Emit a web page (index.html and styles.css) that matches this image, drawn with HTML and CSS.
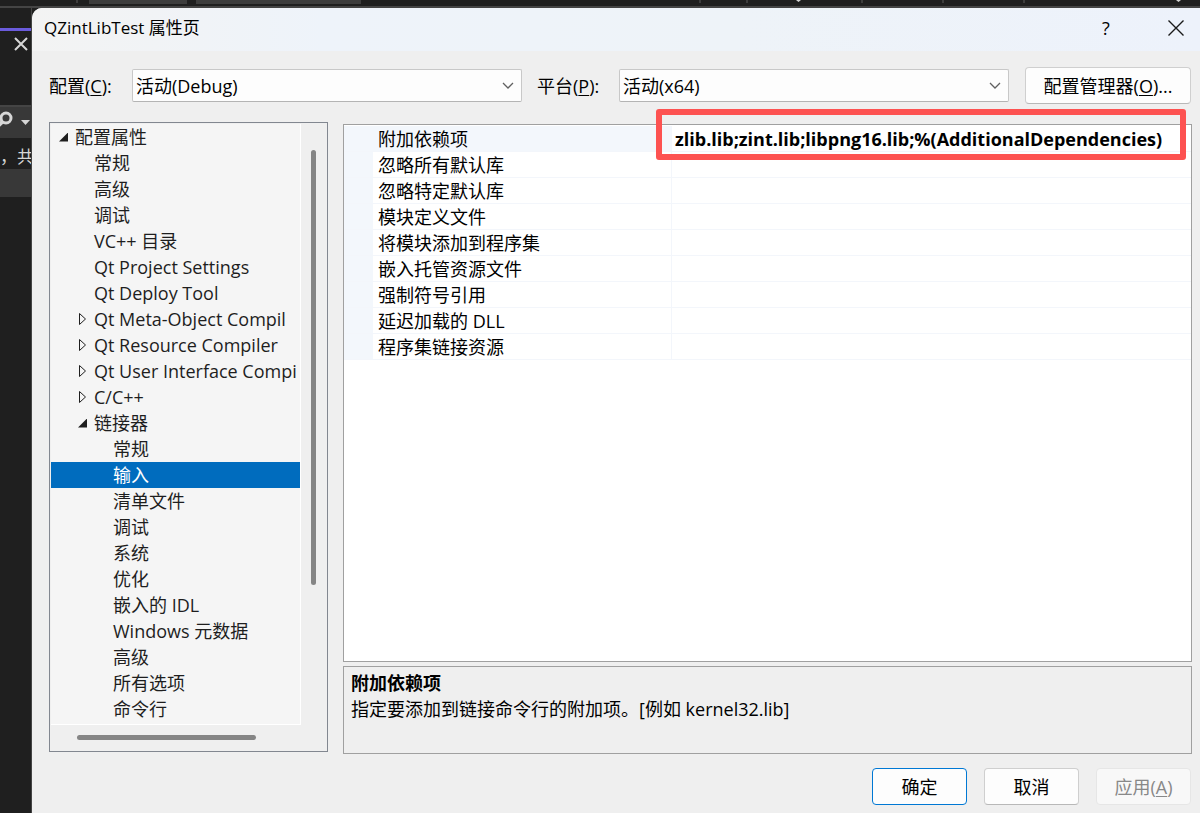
FILE: index.html
```
<!DOCTYPE html>
<html lang="zh-CN">
<head>
    <meta charset="UTF-8">
    <meta name="viewport" content="width=device-width, initial-scale=1.0">
    <title>QZintLibTest 属性页</title>
    <link rel="stylesheet" href="styles.css">
</head>
<body>
    <div class="ide-top">
        <svg width="1200" height="6" viewBox="0 0 1200 6">
            <path d="M76 0h2v3h-2zM699 0h2v3h-2zM746 0h2v3h-2zM861 0h2v3h-2zM942 0h2v3h-2zM1023 0h2v3h-2z" fill="#3d3d3d"/>
            <path d="M89 0h98v4h-98zM196 0h165v4h-165z" fill="#3d3d3d"/>
            <path d="M796 0h5l-2.500 2zM1176 0h5l-2.500 2z" fill="#d6d6d6"/>
        </svg>
    </div>
    <div class="ide-side">
        <div class="ide-tab">
            <svg width="14" height="14" viewBox="0 0 14 14"><path d="M1 1l12 12M13 1L1 13" stroke="#d6d6d6" stroke-width="2" fill="none"/></svg>
        </div>
        <div class="ide-search">
            <svg width="30" height="20" viewBox="0 0 30 20"><circle cx="6" cy="8" r="5" fill="none" stroke="#d6d6d6" stroke-width="3"/><path d="M3 11l-6 6" stroke="#d6d6d6" stroke-width="4"/><path d="M21 10h9l-4.500 5z" fill="#d6d6d6"/></svg>
        </div>
        <div class="ide-count">，共</div>
        <div class="ide-row"></div>
    </div>

    <div class="dialog">
        <header class="title-bar">
            <h1>QZintLibTest 属性页</h1>
            <button class="title-btn" aria-label="帮助">?</button>
            <button class="title-btn close" aria-label="关闭">
                <svg width="16" height="16" viewBox="0 0 16 16"><path d="M0.500 0.500l15 15M15.500 0.500l-15 15" stroke="#1a1a1a" stroke-width="1.400" fill="none"/></svg>
            </button>
        </header>

        <div class="config-bar">
            <label for="config">配置(<u>C</u>):</label>
            <select id="config"><option>活动(Debug)</option></select>
            <label for="platform">平台(<u>P</u>):</label>
            <select id="platform"><option>活动(x64)</option></select>
            <button class="btn manager">配置管理器(<u>O</u>)...</button>
        </div>

        <main class="content">
            <nav class="tree">
                <ul class="tree-list">
                    <li class="open">配置属性</li>
                    <li class="l1">常规</li>
                    <li class="l1">高级</li>
                    <li class="l1">调试</li>
                    <li class="l1">VC++ 目录</li>
                    <li class="l1">Qt Project Settings</li>
                    <li class="l1">Qt Deploy Tool</li>
                    <li class="l1 closed">Qt Meta-Object Compil</li>
                    <li class="l1 closed">Qt Resource Compiler</li>
                    <li class="l1 closed">Qt User Interface Compi</li>
                    <li class="l1 closed">C/C++</li>
                    <li class="l1 open">链接器</li>
                    <li class="l2">常规</li>
                    <li class="l2 selected">输入</li>
                    <li class="l2">清单文件</li>
                    <li class="l2">调试</li>
                    <li class="l2">系统</li>
                    <li class="l2">优化</li>
                    <li class="l2">嵌入的 IDL</li>
                    <li class="l2">Windows 元数据</li>
                    <li class="l2">高级</li>
                    <li class="l2">所有选项</li>
                    <li class="l2">命令行</li>
                </ul>
                <div class="scroll-y"><span></span></div>
                <div class="scroll-x"><span></span></div>
            </nav>

            <section class="details">
                <div class="grid">
                    <table>
                        <colgroup><col class="gutter"><col class="name"><col></colgroup>
                        <tbody>
                            <tr class="current"><td></td><th scope="row">附加依赖项</th><td class="value"><b>zlib.lib;zint.lib;libpng16.lib;%(AdditionalDependencies)</b><span class="marker"></span></td></tr>
                            <tr><td></td><th scope="row">忽略所有默认库</th><td></td></tr>
                            <tr><td></td><th scope="row">忽略特定默认库</th><td></td></tr>
                            <tr><td></td><th scope="row">模块定义文件</th><td></td></tr>
                            <tr><td></td><th scope="row">将模块添加到程序集</th><td></td></tr>
                            <tr><td></td><th scope="row">嵌入托管资源文件</th><td></td></tr>
                            <tr><td></td><th scope="row">强制符号引用</th><td></td></tr>
                            <tr><td></td><th scope="row">延迟加载的 DLL</th><td></td></tr>
                            <tr><td></td><th scope="row">程序集链接资源</th><td></td></tr>
                        </tbody>
                    </table>
                </div>
                <div class="description">
                    <h2>附加依赖项</h2>
                    <p>指定要添加到链接命令行的附加项。[例如 kernel32.lib]</p>
                </div>
            </section>
        </main>

        <footer class="actions">
            <button class="btn primary">确定</button>
            <button class="btn">取消</button>
            <button class="btn" disabled>应用(<u>A</u>)</button>
        </footer>
    </div>
</body>
</html>
```
FILE: styles.css
```
* { box-sizing: border-box; }
body { margin: 0; min-height: 100vh; display: grid; grid-template: 8px 1fr / 32px 1fr; background: #1f1f1f; color: #000; font: 18px/26px "Open Sans", "Noto Sans CJK SC", sans-serif; overflow: hidden; }
button, select { font: inherit; color: inherit; }
h1, h2, p, ul { margin: 0; padding: 0; font-size: inherit; }
u { text-underline-offset: 2px; text-decoration-thickness: 1px; }

/* editor window behind the dialog */
.ide-top { grid-column: 1 / -1; overflow: hidden; border-bottom: 2px solid #444; }
.ide-top svg { display: block; }
.ide-side { color: #d6d6d6; overflow: hidden; padding-top: 20px; border-right: 1px solid #444; }
.ide-tab { height: 77px; border-top: 3px solid #6a5bdc; padding: 6px 0 0 14px; }
.ide-search { height: 33px; background: #383838; border-top: 2px solid #444; padding-top: 3px; }
.ide-count { height: 31px; padding-top: 6px; font-size: 17px; white-space: nowrap; }
.ide-row { height: 28px; background: #383838; }
.ide-side svg { display: block; }

.dialog { display: flex; flex-direction: column; background: #efefef; border-top-left-radius: 10px; overflow: hidden; }
.title-bar { display: flex; align-items: center; height: 43px; padding: 0 8px 3px 12px; background: linear-gradient(90deg, #f3f3f3, #eef3fa 25%, #eef3f8 60%, #edf2fb); }
.title-bar h1 { flex: 1; font-size: 17px; font-weight: 400; }
.title-btn { width: 32px; padding: 0; border: 0; background: none; }
.title-btn.close { margin-left: 38px; display: flex; justify-content: center; }

.config-bar { display: flex; align-items: center; padding: 16px 9px 0 17px; }
.config-bar label { width: 83px; }
.config-bar select + label { width: 97px; padding-left: 15px; }
.config-bar select { flex: 1; min-width: 0; height: 33px; padding: 0 3px; appearance: none; border: 1px solid #c8c8c8; border-bottom-color: #b4b4b4; border-radius: 2px; background: #fdfdfd url("data:image/svg+xml,%3Csvg xmlns='http://www.w3.org/2000/svg' width='12' height='7'%3E%3Cpath d='M1 1l5 5 5-5' fill='none' stroke='%23606060' stroke-width='1.300'/%3E%3C/svg%3E") no-repeat right 7px center; }

.btn { width: 95px; height: 37px; padding: 0; border: 1px solid #cfcfcf; border-bottom-color: #b8b8b8; border-radius: 4px; background: #fdfdfd; }
.btn.manager { width: 166px; margin-left: 16px; }
.btn.primary { border-color: #0078d4; }
.btn:disabled { color: #888; background: #f8f8f8; border-color: #e6e6e6; }

.content { flex: 1; display: flex; gap: 15px; padding: 18px 8px 0 17px; }
.tree { width: 279px; display: grid; grid-template: 1fr 26px / 1fr 26px; padding: 1px 0 0 1px; border: 1px solid #828790; }
.tree-list { list-style: none; overflow: hidden; background: #f5f5f5; border: solid #fff; border-width: 0 1px 1px 0; color: #1e1e1e; }
.tree-list li { display: flex; align-items: center; padding-left: 8px; white-space: nowrap; }
.tree-list li::before { content: ""; width: 9px; height: 14px; margin-right: 7px; flex: none; }
.tree-list .l1 { padding-left: 27px; }
.tree-list .l2 { padding-left: 46px; }
.tree-list .open::before { height: 9px; background: #1e1e1e; clip-path: polygon(100% 0, 100% 100%, 0 100%); }
.tree-list .closed::before { background: url("data:image/svg+xml,%3Csvg xmlns='http://www.w3.org/2000/svg' width='9' height='14'%3E%3Cpath d='M1.500 1.500v11l6-5.500z' fill='none' stroke='%231e1e1e'/%3E%3C/svg%3E"); }
.tree-list .selected { background: #006cbe; color: #fff; }
.scroll-y { padding: 26px 0 0 10px; }
.scroll-y span { display: block; width: 5px; height: 435px; border-radius: 3px; background: #858585; }
.scroll-x { padding: 10px 0 0 26px; }
.scroll-x span { display: block; width: 179px; height: 5px; border-radius: 3px; background: #858585; }

.details { flex: 1; min-width: 0; display: flex; flex-direction: column; gap: 4px; padding-top: 2px; margin-bottom: -2px; }
.grid { flex: 1; padding-top: 1px; border: 1px solid #a0a0a0; background: #fff; }
.grid table { width: 100%; table-layout: fixed; border-collapse: separate; border-spacing: 0; }
.gutter { width: 29px; }
.name { width: 299px; }
.grid td, .grid th { height: 26px; padding: 1px 4px 0 5px; font-weight: 400; line-height: 24px; text-align: left; white-space: nowrap; border-bottom: 1px solid #f3f6fb; }
.grid th { border-right: 1px solid #f3f6fb; }
.grid td:first-child, .current th { background: #f3f7fc; }
.grid .value { position: relative; padding-left: 3px; }
.marker { position: absolute; inset: -17px 5px -9px -16px; border: 6px solid #fd5251; border-radius: 3px; }
.description { height: 88px; padding: 3px 7px; border: 1px solid #a0a0a0; }

.actions { display: flex; justify-content: flex-end; gap: 17px; padding: 16px 9px 8px; }
```
